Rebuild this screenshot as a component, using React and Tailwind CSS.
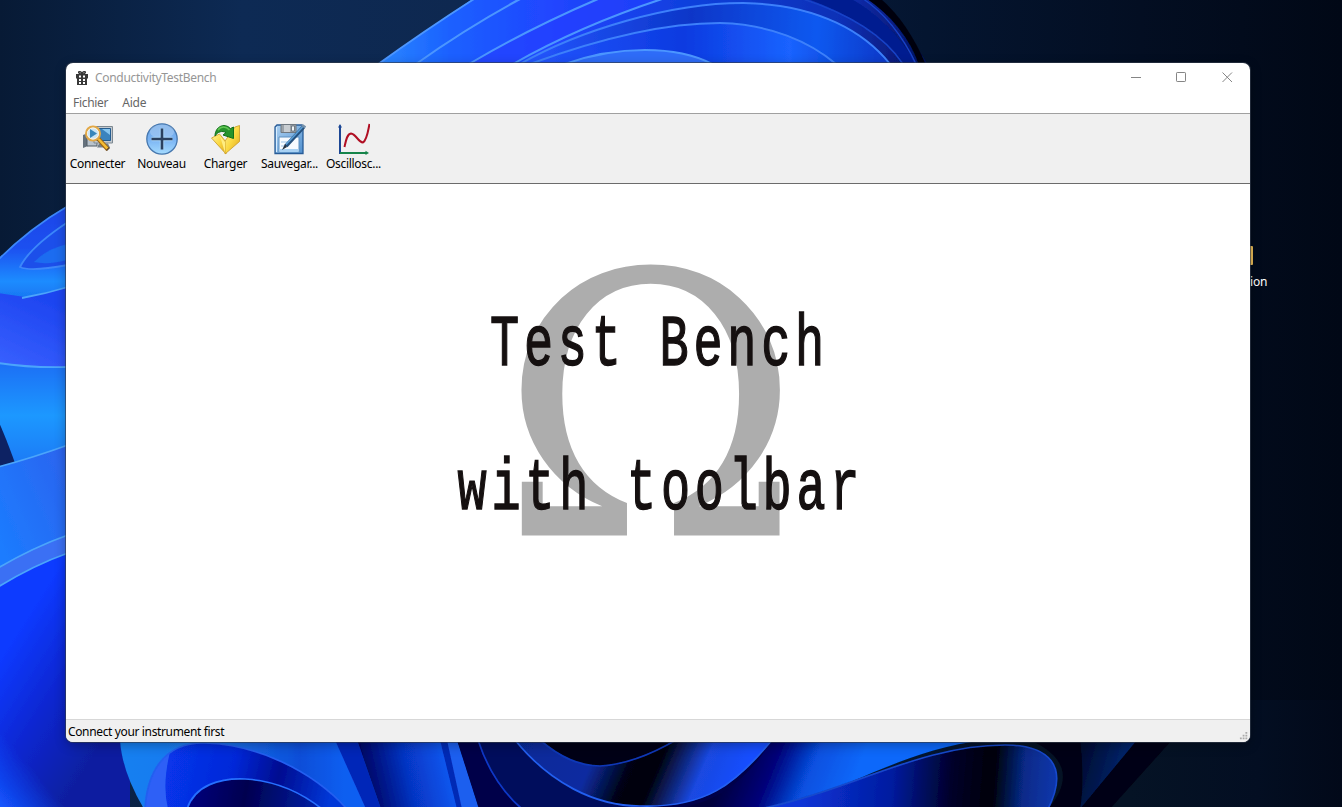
import React from "react";

const UI = "font-['Noto_Sans','Open_Sans',sans-serif]";

function Wallpaper() {
  return (
    <svg className="absolute inset-0 h-full w-full" viewBox="0 0 1342 807" preserveAspectRatio="none" aria-hidden="true">
      <defs>
        <linearGradient id="sky" x1="0" x2="1" y1="0" y2="0">
          <stop offset="0" stopColor="#071a35" />
          <stop offset=".18" stopColor="#0d2a54" />
          <stop offset=".34" stopColor="#0e2850" />
          <stop offset=".69" stopColor="#041530" />
          <stop offset=".85" stopColor="#030e22" />
          <stop offset="1" stopColor="#010816" />
        </linearGradient>
        <linearGradient id="top" gradientUnits="userSpaceOnUse" x1="380" x2="925" y1="40" y2="40">
          <stop offset="0" stopColor="#2a86ff" />
          <stop offset=".13" stopColor="#1a60ff" />
          <stop offset=".32" stopColor="#2145ff" />
          <stop offset=".6" stopColor="#0d3fd8" />
          <stop offset=".85" stopColor="#0a2fb5" />
          <stop offset="1" stopColor="#051260" />
        </linearGradient>
        <linearGradient id="petal" gradientUnits="userSpaceOnUse" x1="530" x2="890" y1="0" y2="20">
          <stop offset="0" stopColor="#2456ff" />
          <stop offset=".45" stopColor="#0b36c8" />
          <stop offset=".8" stopColor="#0759f0" />
          <stop offset="1" stopColor="#0a38c8" />
        </linearGradient>
        <linearGradient id="petal2" gradientUnits="userSpaceOnUse" x1="530" x2="836" y1="0" y2="0">
          <stop offset="0" stopColor="#2456ff" />
          <stop offset=".5" stopColor="#0c3ae0" />
          <stop offset=".85" stopColor="#1a63ff" />
          <stop offset="1" stopColor="#0c4ce0" />
        </linearGradient>
        <linearGradient id="left" x1="0" x2="0" y1="0" y2="1">
          <stop offset="0" stopColor="#1c46e8" />
          <stop offset=".45" stopColor="#1a50f0" />
          <stop offset=".8" stopColor="#1c8cff" />
          <stop offset="1" stopColor="#1874f0" />
        </linearGradient>
        <linearGradient id="violet" x1="0" x2=".4" y1="1" y2="0">
          <stop offset="0" stopColor="#3a62ff" />
          <stop offset="1" stopColor="#1d44f0" />
        </linearGradient>
        <linearGradient id="cyan" x1="0" x2="0" y1="0" y2="1">
          <stop offset="0" stopColor="#1f6ff5" />
          <stop offset=".5" stopColor="#1e98ff" />
          <stop offset="1" stopColor="#1b78f5" />
        </linearGradient>
        <linearGradient id="mid" x1="0" x2="1" y1=".8" y2="0">
          <stop offset="0" stopColor="#1c7cff" />
          <stop offset="1" stopColor="#2c63ee" />
        </linearGradient>
        <linearGradient id="deep" gradientUnits="userSpaceOnUse" x1="0" x2="110" y1="660" y2="730">
          <stop offset="0" stopColor="#103aff" />
          <stop offset=".5" stopColor="#0a26cf" />
          <stop offset="1" stopColor="#071fa0" />
        </linearGradient>
        <linearGradient id="glow" gradientUnits="userSpaceOnUse" x1="0" x2="38" y1="807" y2="775">
          <stop offset="0" stopColor="#1458ff" />
          <stop offset="1" stopColor="#1450ff" stopOpacity="0" />
        </linearGradient>
        <linearGradient id="b1" gradientUnits="userSpaceOnUse" x1="120" x2="480" y1="0" y2="0">
          <stop offset="0" stopColor="#1680f0" />
          <stop offset=".25" stopColor="#1c78f0" />
          <stop offset=".5" stopColor="#0c4ed8" />
          <stop offset=".62" stopColor="#0a5ef0" />
          <stop offset="1" stopColor="#1a60ff" />
        </linearGradient>
        <linearGradient id="b2" gradientUnits="userSpaceOnUse" x1="150" x2="330" y1="760" y2="800">
          <stop offset="0" stopColor="#0838f0" />
          <stop offset=".45" stopColor="#0428d8" />
          <stop offset=".7" stopColor="#020c90" />
          <stop offset="1" stopColor="#0638d8" />
        </linearGradient>
        <linearGradient id="b3" gradientUnits="userSpaceOnUse" x1="195" x2="321" y1="785" y2="807">
          <stop offset="0" stopColor="#02007a" />
          <stop offset=".4" stopColor="#01004f" />
          <stop offset="1" stopColor="#0320a8" />
        </linearGradient>
        <linearGradient id="b4" gradientUnits="userSpaceOnUse" x1="365" x2="455" y1="790" y2="770">
          <stop offset="0" stopColor="#01005c" />
          <stop offset=".5" stopColor="#0635c4" />
          <stop offset="1" stopColor="#0a5cf5" />
        </linearGradient>
        <linearGradient id="b5" gradientUnits="userSpaceOnUse" x1="515" x2="720" y1="742" y2="830">
          <stop offset="0" stopColor="#062b98" />
          <stop offset=".35" stopColor="#0a2ca0" />
          <stop offset=".52" stopColor="#010112" />
          <stop offset=".63" stopColor="#01010c" />
          <stop offset=".82" stopColor="#1a48e0" />
          <stop offset="1" stopColor="#164eff" />
        </linearGradient>
        <linearGradient id="b6" gradientUnits="userSpaceOnUse" x1="735" x2="850" y1="742" y2="790">
          <stop offset="0" stopColor="#01003a" />
          <stop offset=".35" stopColor="#020078" />
          <stop offset=".65" stopColor="#0750e0" />
          <stop offset="1" stopColor="#0768fa" />
        </linearGradient>
        <linearGradient id="b7" gradientUnits="userSpaceOnUse" x1="800" x2="1058" y1="790" y2="810">
          <stop offset="0" stopColor="#0a36d8" />
          <stop offset=".35" stopColor="#031ba0" />
          <stop offset=".58" stopColor="#01012a" />
          <stop offset=".74" stopColor="#010008" />
          <stop offset=".86" stopColor="#072a88" />
          <stop offset="1" stopColor="#0c38b0" />
        </linearGradient>
        <linearGradient id="b8" gradientUnits="userSpaceOnUse" x1="1060" x2="1130" y1="760" y2="780">
          <stop offset="0" stopColor="#010018" />
          <stop offset="1" stopColor="#062a78" />
        </linearGradient>
        <linearGradient id="floor" gradientUnits="userSpaceOnUse" x1="1130" x2="1342" y1="0" y2="0">
          <stop offset="0" stopColor="#051325" />
          <stop offset=".6" stopColor="#030e22" />
          <stop offset="1" stopColor="#020919" />
        </linearGradient>
        <filter id="soft"><feGaussianBlur stdDeviation=".7" /></filter>
      </defs>
      <rect width="1342" height="807" fill="url(#sky)" />
      <path d="M1000 700H1342V807H1000z" fill="url(#floor)" />
      <g filter="url(#soft)">
        {/* upper bloom */}
        <path d="M377 65 Q424 31 474 -2H866Q905 25 928 65z" fill="url(#top)" />
        <path d="M866 -2Q905 25 919 65H926Q908 22 880 -2z" fill="#01030f" />
        <path d="M805 -2Q880 25 905 65H917Q890 20 850 -2z" fill="#061f90" />
        <path d="M469 64Q530 28 598 -1H660Q575 28 513 64z" fill="#2340ff" opacity=".7" />
        <path d="M520 64C580 30 670 3 743 3C820 4 866 34 890 64z" fill="url(#petal)" />
        <path d="M530 64C590 42 660 23 720 23C770 24 810 42 836 64z" fill="url(#petal2)" />
        <path d="M565 64C590 55 615 50 645 50C675 50 695 55 712 64z" fill="#2e6cf8" />
        <g fill="none" stroke="#4c96ff" strokeWidth="2">
          <path d="M377 65Q424 31 474 -1M416 64Q465 29 520 -1M469 64Q530 28 598 -1M513 64Q580 26 662 -1" />
          <path d="M520 64C580 30 670 3 743 3C820 4 866 34 890 64" stroke="#3d80fb" />
          <path d="M530 64C590 42 660 23 720 23C770 24 810 42 836 64" stroke="#3d80fb" />
          <path d="M565 64C590 55 615 50 645 50C675 50 695 55 712 64" />
          <path d="M800 -2Q875 22 903 64M862 -2Q895 20 916 64" stroke="#1643c8" strokeWidth="1.5" />
        </g>
        {/* left petals */}
        <path d="M-2 260Q30 228 68 206V300H-2z" fill="url(#left)" />
        <path d="M68 222Q30 247 20 267Q30 272 68 265z" fill="#1c50ea" />
        <path d="M34 262Q48 248 68 244V260Q48 265 34 262z" fill="#1a6cf0" />
        <path d="M-2 293L25 297Q45 293 68 287V370H-2z" fill="url(#violet)" />
        <path d="M-2 363Q30 368 68 367V450L-2 468z" fill="url(#cyan)" />
        <path d="M-2 420Q6 438 15 463L-2 468z" fill="#082264" />
        <path d="M-2 467Q32 458 68 445V540L-2 572z" fill="url(#mid)" />
        <path d="M-2 568Q34 547 68 535V555L-2 588z" fill="#3a70f4" />
        <path d="M-2 587Q34 565 68 553V735H130V810H-2z" fill="url(#deep)" />
        <path d="M-2 735H80V810H-2z" fill="url(#glow)" />
        <g fill="none" stroke="#4ba5fb" strokeWidth="1.8">
          <path d="M-2 260Q30 228 68 206M68 222Q30 247 20 267Q30 272 68 265" stroke="#3c87fa" />
          <path d="M22 298Q45 294 68 287M-2 363Q30 368 68 367M-2 467Q32 458 68 445M-2 568Q34 547 68 535M-2 587Q34 565 68 553" />
        </g>
        {/* lower petals */}
        <path d="M120 740Q122 772 144 809H479L457 740z" fill="url(#b1)" />
        <path d="M145 809C147 775 162 742 205 743C255 744 312 770 347 809z" fill="url(#b2)" />
        <path d="M145 809C147 785 154 765 170 752Q162 785 168 809z" fill="#2d60f6" />
        <path d="M187 809C195 785 220 778 245 779C278 781 302 793 322 809z" fill="url(#b3)" />
        <path d="M335 740L366 809H381L357 740z" fill="#0628b8" />
        <path d="M357 740L381 809H462L440 740z" fill="url(#b4)" />
        <path d="M440 740L462 809H479L457 740z" fill="#1c5fef" />
        <path d="M440 740L457 809H462L447 740z" fill="#0629b5" />
        <path d="M457 740L479 809H745L790 740z" fill="#010048" />
        <path d="M478 740Q492 783 522 809H650C590 798 550 775 515 740z" fill="#02105c" />
        <path d="M515 740C550 783 595 806 640 806C705 808 735 785 772 740z" fill="url(#b5)" />
        <path d="M540 740Q570 766 600 766Q635 764 676 740z" fill="#010112" />
        <path d="M772 740C750 775 720 805 670 809H770C840 795 900 750 985 740z" fill="url(#b6)" />
        <path d="M760 809C850 791 920 745 1005 745C1048 745 1070 765 1048 809z" fill="url(#b7)" />
        <path d="M1030 740Q1085 765 1048 809H1110L1172 740z" fill="#010014" />
        <path d="M1080 740Q1085 780 1080 809L1137 740z" fill="url(#b8)" />
        <g fill="none" stroke="#245ff0" strokeWidth="1.7">
          <path d="M145 809C147 775 162 742 205 743C255 744 312 770 347 809" />
          <path d="M187 809C195 785 220 778 245 779C278 781 302 793 322 809" stroke="#2670ff" />
          <path d="M478 740Q492 783 522 809" stroke="#1038c8" />
          <path d="M515 740C550 783 595 806 640 806C705 808 735 785 772 740" />
          <path d="M540 740Q570 766 600 766Q635 764 676 740" stroke="#1038b8" />
          <path d="M760 809C850 791 920 745 1005 745C1048 745 1070 765 1048 809" stroke="#1648cc" />
        </g>
      </g>
    </svg>
  );
}

function ConnectIcon() {
  return (
    <svg width="32" height="32" viewBox="0 0 32 32">
      <path d="M1 12l5-2v13l-5 2z" fill="#65717c" />
      <path d="M5 8h10v15H5z" fill="#b9c3cc" stroke="#4f5a65" />
      <path d="M12 3.500h18.500V20H12z" fill="#c3c9cf" stroke="#7d8891" />
      <path d="M13 5.500h15.500V17.500H13z" fill="#3a83bd" stroke="#255c8e" />
      <path d="M20 6h8v6z" fill="#86c5ef" />
      <path d="M17 20.500h9l2 4H15z" fill="#747f87" />
      <circle cx="11" cy="10.500" r="7" fill="#c9e4f5" stroke="#e3a846" strokeWidth="2" />
      <circle cx="11" cy="10.500" r="5.500" fill="none" stroke="#fff4de" />
      <path d="M8 6l7 4.500L8 15z" fill="#3685ba" />
      <path d="M16.500 16l9.500 10.500" stroke="#9b6413" strokeWidth="4.400" />
      <path d="M16.500 16l9 9.700" stroke="#f5bd35" strokeWidth="2.500" />
      <path d="M24.500 27.500l3-3" stroke="#5e4930" strokeWidth="1.500" />
    </svg>
  );
}

function NewIcon() {
  return (
    <svg width="32" height="32" viewBox="0 0 32 32">
      <defs><linearGradient id="ball" x2="0" y2="1"><stop stopColor="#71a9e6" /><stop offset=".5" stopColor="#79b2f3" /><stop offset="1" stopColor="#a5dcff" /></linearGradient></defs>
      <circle cx="16" cy="16" r="15.200" fill="url(#ball)" stroke="#4677ae" strokeWidth="1.300" />
      <ellipse cx="16" cy="8.500" rx="12" ry="7" fill="#fff" opacity=".22" />
      <path d="M16 5.500v21M5.500 16h21" stroke="#a9d5fa" strokeWidth="4.500" />
      <path d="M16 5.500v21M5.500 16h21" stroke="#2b4160" strokeWidth="2.600" />
    </svg>
  );
}

function OpenIcon() {
  return (
    <svg width="32" height="32" viewBox="0 0 32 32">
      <defs><linearGradient id="folder" x2="1" y2="1"><stop stopColor="#fff29b" /><stop offset=".5" stopColor="#fbd942" /><stop offset="1" stopColor="#dfa51e" /></linearGradient></defs>
      <path d="M1.500 15l8-4 6.500 8v12z" fill="url(#folder)" stroke="#c99a25" strokeWidth=".8" />
      <path d="M15 31V18L25 4l4.500-1.500v16z" fill="url(#folder)" stroke="#c99a25" strokeWidth=".8" />
      <path d="M15 30V19l-5-6z" fill="#ffed82" />
      <path d="M5 13C5 4 14 -1 20.500 5.500l3-1.500 0 11.500-10.500-3.500 3-2.500c-4-2-8-1-11 3.500z" fill="#27932c" stroke="#126f1b" />
      <path d="M8 7c3-4 8-4 11.500 0" fill="none" stroke="#61c755" strokeWidth="1.500" />
    </svg>
  );
}

function SaveIcon() {
  return (
    <svg width="32" height="32" viewBox="0 0 32 32">
      <defs><linearGradient id="disk" x2="1" y2="1"><stop stopColor="#aed2f2" /><stop offset="1" stopColor="#4f8fce" /></linearGradient></defs>
      <path d="M1 4l2-2h25l1 2v26.500H1z" fill="url(#disk)" stroke="#275b97" strokeWidth="1.300" />
      <path d="M2.500 4v25" stroke="#d9eeff" />
      <path d="M7 1.500h15v8H7z" fill="#9ba2a9" stroke="#6f7880" />
      <path d="M10 2h6v7h-6z" fill="#c8cdd1" /><path d="M17.500 3h3v5h-3z" fill="#eef2f4" stroke="#5c6873" strokeWidth=".8" />
      <path d="M5 14h20v15H5z" fill="#f7fbff" stroke="#5f91c1" />
      <path d="M7 19h9M7 23h6" stroke="#9bc3e7" /><path d="M5.500 26h19v3h-19z" fill="#a8d1f3" />
      <path d="M29.500 4L12 23" stroke="#25517e" strokeWidth="4" />
      <path d="M28.500 4L12 21.500" stroke="#5b9fd7" strokeWidth="1.600" />
      <path d="M11 21l-3 6 5-3z" fill="#263341" />
      <path d="M28 2l3.500 2.500" stroke="#7691aa" strokeWidth="2.500" />
    </svg>
  );
}

function ScopeIcon() {
  return (
    <svg width="32" height="32" viewBox="0 0 32 32" fill="none">
      <path d="M2 2.500V31" stroke="#1c4795" strokeWidth="2" /><path d="M0 4.500L2 1l2 3.500z" fill="#1c4795" />
      <path d="M2 30h27" stroke="#16844a" strokeWidth="2" /><path d="M27.500 27.800L31 30l-3.500 2z" fill="#16844a" />
      <path d="M6.500 24C8 17 9 11 13 10.500C18 11 20 19 25 19.500C29 17 30 8 31.500 1" stroke="#b00f23" strokeWidth="2" />
    </svg>
  );
}

const tools = [
  ["Connecter", ConnectIcon],
  ["Nouveau", NewIcon],
  ["Charger", OpenIcon],
  ["Sauvegar...", SaveIcon],
  ["Oscillosc...", ScopeIcon],
];

function TitleBar() {
  return (
    <header className="flex h-[30px] shrink-0 items-center pl-2.5">
      <svg width="12" height="14" viewBox="0 0 12 14" className="shrink-0">
        <path d="M0 3h12v4.500H0zM1 7.500h10V14H1z" fill="#383838" />
        <path d="M6 3C3 3 2 1 3 .6S5.500 1 6 3c.5-2 2-2.800 3-2.400S9 3 6 3z" fill="none" stroke="#383838" strokeWidth="1.300" />
        <path d="M3 4.500h2v2H3zM7 4.500h2v2H7zM3 8h2v2H3zM7 8h2v2H7zM3 11h2v2H3zM7 11h2v2H7z" fill="#fff" />
      </svg>
      <span className="ml-[7px] whitespace-nowrap text-[12px] leading-4 tracking-[-0.3px] text-[#969696]">ConductivityTestBench</span>
      <div className="ml-auto flex items-center pb-0.5 pr-[17px] text-[#858585]">
        <svg width="102" height="12" viewBox="0 0 102 12" fill="none" stroke="currentColor">
          <path d="M0 6.500h10" /><rect x="45.500" y="1.500" width="9" height="9" rx=".7" /><path d="M91.500 1.500l9.500 9.500M101 1.500l-9.500 9.500" />
        </svg>
      </div>
    </header>
  );
}

export default function App() {
  return (
    <main className={`relative h-[807px] w-[1342px] overflow-hidden bg-[#04101f] pl-[66px] pt-[63px] ${UI}`}>
      <Wallpaper />
      <div className="absolute left-[1238px] top-[246px] flex w-8 flex-col text-white">
        <span className="h-[19px] w-[15px] rounded-r-[1px] bg-[#e6b957]" />
        <span className="mt-2 pl-3 text-[12px] leading-[18px] tracking-[-0.2px]">ion</span>
      </div>
      <section className="relative flex h-[679px] w-[1184px] flex-col overflow-hidden rounded-[7px] bg-white shadow-[0_0_0_1px_rgba(50,60,75,.65),0_3px_12px_rgba(0,0,0,.3)]">
        <TitleBar />
        <nav className="flex h-5 shrink-0 items-center gap-[14px] pl-[7px] text-[12px] leading-4 text-[#666]">
          <span className="tracking-[-0.3px]">Fichier</span><span className="tracking-[-0.2px]">Aide</span>
        </nav>
        <div className="flex h-[71px] shrink-0 border-b border-t border-b-[#6b6b6b] border-t-[#a0a0a0] bg-[#f0f0f0] pt-[9px]">
          {tools.map(([label, Icon]) => (
            <div key={label} className="flex w-16 shrink-0 flex-col items-center">
              <Icon />
              <span className="-ml-px whitespace-nowrap text-[12px] leading-[17px] tracking-[-0.3px] text-black">{label}</span>
            </div>
          ))}
        </div>
        <div className="min-h-0 flex-1 bg-white">
          <svg className="block h-[535px] w-[1184px]" viewBox="66 184 1184 535">
            <text transform="translate(650.500 535.500)" textAnchor="middle" fontFamily="DejaVu Serif" fontSize="365" fill="#adadad">Ω</text>
            <g fontFamily="Liberation Mono" fontSize="72.500" fill="#151010" stroke="#151010" strokeWidth="1.500">
              <text transform="translate(490 365) scale(.67 1)" letterSpacing="7.100">Test Bench</text>
              <text transform="translate(457.500 509) scale(.67 1)" letterSpacing="7.100">with toolbar</text>
            </g>
          </svg>
        </div>
        <footer className="flex h-[23px] shrink-0 items-center justify-between border-t border-[#d7d7d7] bg-[#f0f0f0] pl-0.5 text-[12px] leading-4 text-black">
          <span className="whitespace-nowrap pt-0.5 tracking-[-0.36px]">Connect your instrument first</span>
          <svg width="11" height="11" viewBox="0 0 12 12" className="self-end"><path d="M7 1h2v2H7zM7 4h2v2H7zM4 4h2v2H4zM7 7h2v2H7zM4 7h2v2H4zM1 7h2v2H1z" fill="#aaa" /></svg>
        </footer>
      </section>
    </main>
  );
}
